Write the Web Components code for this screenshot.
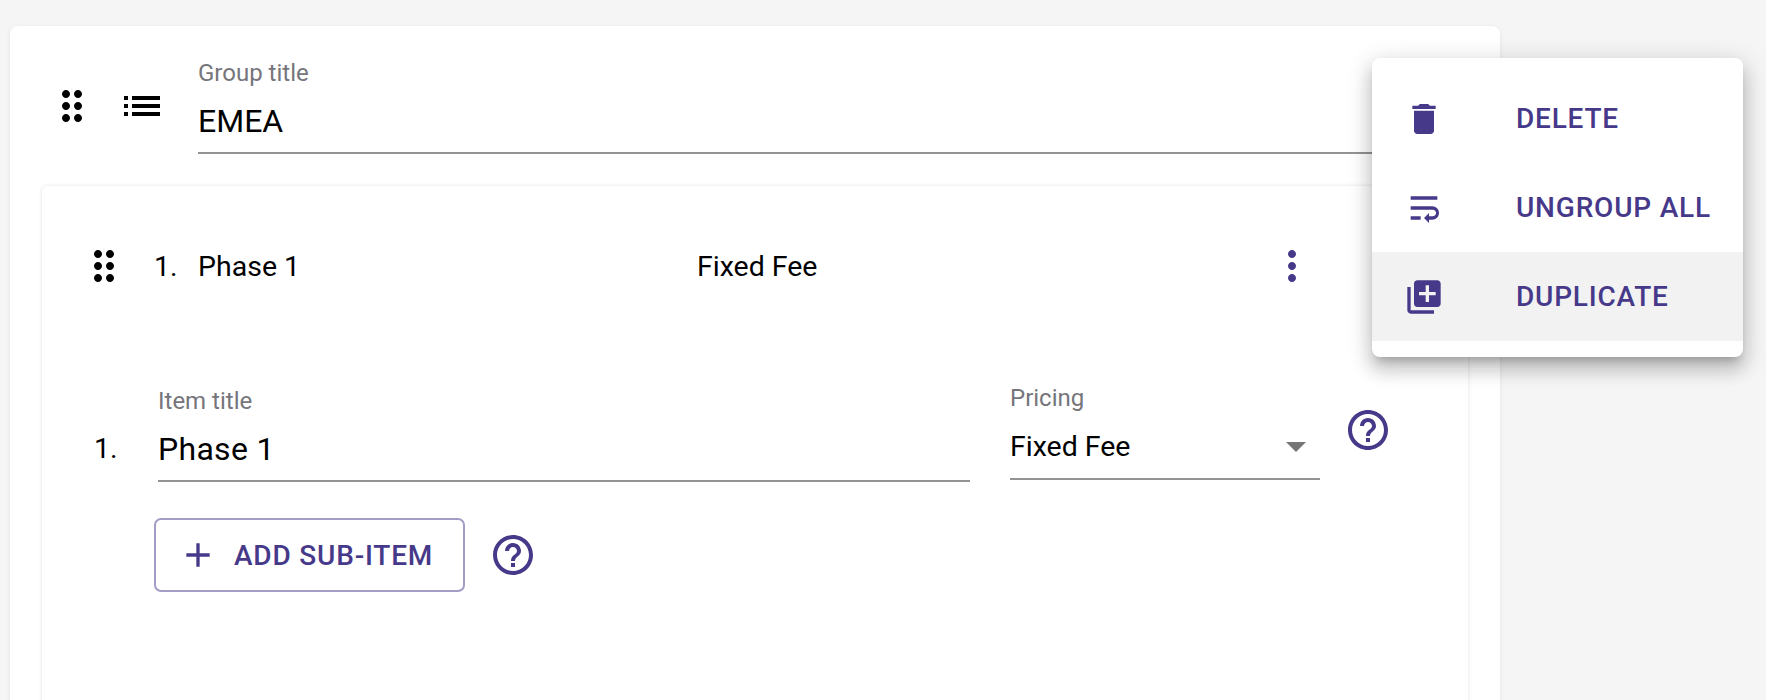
<!DOCTYPE html>
<html><head><meta charset="utf-8">
<style>
html,body{margin:0;height:700px;overflow:hidden;background:#f5f5f5;font-family:Roboto,"Liberation Sans",sans-serif;}
</style></head><body>
<x-page>
  <x-card kind="group">
    <x-row kind="group">
      <x-icon name="drag" style="margin-top:24px"></x-icon>
      <x-icon name="list" style="margin-left:22px;margin-top:24px"></x-icon>
      <x-field label="Group title" value="EMEA" style="margin-left:32px;flex:1;--value-size:32px;--gap:12px;--pad:10px"></x-field>
    </x-row>
    <x-card kind="item">
      <x-row kind="summary">
        <x-icon name="drag"></x-icon>
        <x-text style="margin:2px 0 0 26px;width:44px">1.</x-text>
        <x-text style="margin-top:2px;width:499px">Phase 1</x-text>
        <x-text style="margin-top:2px;width:571px">Fixed Fee</x-text>
        <x-icon name="more" color="#47398a"></x-icon>
      </x-row>
      <x-row kind="fields">
        <x-text style="width:64px;margin-top:46px;line-height:40px">1.</x-text>
        <x-field label="Item title" value="Phase 1" style="width:812px;--value-size:32px;--ls:.3px;--top:3px;--gap:12px;--pad:10px"></x-field>
        <x-field label="Pricing" value="Fixed Fee" select style="width:310px;margin-left:40px;--gap:13px;--pad:10px"></x-field>
        <x-icon name="help" color="#47398a" style="margin-left:24px;margin-top:23px"></x-icon>
      </x-row>
      <x-row kind="actions">
        <x-button>ADD SUB-ITEM</x-button>
        <x-icon name="help" color="#47398a" style="margin-left:24px"></x-icon>
      </x-row>
    </x-card>
  </x-card>
  <x-menu>
    <x-menu-item icon="delete">DELETE</x-menu-item>
    <x-menu-item icon="wrap">UNGROUP ALL</x-menu-item>
    <x-menu-item icon="library" active>DUPLICATE</x-menu-item>
  </x-menu>
</x-page>
<script>
const ICONS={
 drag:'M11 18c0 1.1-.9 2-2 2s-2-.9-2-2 .9-2 2-2 2 .9 2 2zm-2-8c-1.1 0-2 .9-2 2s.9 2 2 2 2-.9 2-2-.9-2-2-2zm0-6c-1.1 0-2 .9-2 2s.9 2 2 2 2-.9 2-2-.9-2-2-2zm6 4c1.1 0 2-.9 2-2s-.9-2-2-2-2 .9-2 2 .9 2 2 2zm0 2c-1.1 0-2 .9-2 2s.9 2 2 2 2-.9 2-2-.9-2-2-2zm0 6c-1.1 0-2 .9-2 2s.9 2 2 2 2-.9 2-2-.9-2-2-2z',
 list:'M3 13h2v-2H3v2zm0 4h2v-2H3v2zm0-8h2V7H3v2zm4 4h14v-2H7v2zm0 4h14v-2H7v2zM7 7v2h14V7H7z',
 more:'M12 8c1.1 0 2-.9 2-2s-.9-2-2-2-2 .9-2 2 .9 2 2 2zm0 2c-1.1 0-2 .9-2 2s.9 2 2 2 2-.9 2-2-.9-2-2-2zm0 6c-1.1 0-2 .9-2 2s.9 2 2 2 2-.9 2-2-.9-2-2-2z',
 help:'M11 18h2v-2h-2v2zm1-16C6.48 2 2 6.48 2 12s4.48 10 10 10 10-4.48 10-10S17.52 2 12 2zm0 18c-4.41 0-8-3.59-8-8s3.59-8 8-8 8 3.59 8 8-3.59 8-8 8zm0-14c-2.21 0-4 1.79-4 4h2c0-1.1.9-2 2-2s2 .9 2 2c0 2-3 1.75-3 5h2c0-2.25 3-2.5 3-5 0-2.21-1.79-4-4-4z',
 add:'M19 13h-6v6h-2v-6H5v-2h6V5h2v6h6v2z',
 delete:'M6 19c0 1.1.9 2 2 2h8c1.1 0 2-.9 2-2V7H6v12zM19 4h-3.5l-1-1h-5l-1 1H5v2h14V4z',
 wrap:'M4 19h6v-2H4v2zM20 5H4v2h16V5zm-3 6H4v2h13.25c1.1 0 2 .9 2 2s-.9 2-2 2H15v-2l-3 3 3 3v-2h2c2.21 0 4-1.79 4-4s-1.79-4-4-4z',
 library:'M4 6H2v14c0 1.1.9 2 2 2h14v-2H4V6zm16-4H8c-1.1 0-2 .9-2 2v12c0 1.1.9 2 2 2h12c1.1 0 2-.9 2-2V4c0-1.1-.9-2-2-2zm-1 9h-4v4h-2v-4H9V9h4V5h2v4h4v2z'
};
function def(name,html){
  customElements.define(name,class extends HTMLElement{
    connectedCallback(){
      if(this.shadowRoot)return;
      const s=this.attachShadow({mode:'open'});
      s.innerHTML=typeof html==='function'?html(this):html;
    }
  });
}
def('x-page',`<style>:host{display:block;position:relative;height:700px;overflow:hidden;padding-top:26px;box-sizing:border-box}</style><slot></slot>`);
def('x-card',el=>el.getAttribute('kind')==='group'
 ?`<style>:host{display:block;background:#fff;border-radius:8px;margin-left:10px;width:1490px;height:900px;box-shadow:0 1px 4px rgba(0,0,0,.08)}</style><slot></slot>`
 :`<style>:host{display:block;background:#fff;border-radius:5px;margin:32px 0 0 32px;width:1426px;height:700px;box-shadow:0 0 4px rgba(0,0,0,.12)}</style><slot></slot>`);
def('x-row',el=>{
 const k=el.getAttribute('kind');
 const m={group:'padding:32px 0 0 38px;height:96px;align-items:flex-start',
  summary:'padding:56px 0 0 38px;height:48px;align-items:center',
  fields:'margin-top:93px;padding-left:52px;align-items:flex-start',
  actions:'margin-top:36px;padding-left:113px;align-items:center'}[k];
 return `<style>:host{display:flex;${m}}</style><slot></slot>`;
});
def('x-icon',el=>{
 const n=el.getAttribute('name'),c=el.getAttribute('color')||'#000';
 return `<style>:host{display:block;flex:none;width:48px;height:48px}svg{display:block;width:48px;height:48px}</style><svg viewBox="0 0 24 24"><path fill="${c}" d="${ICONS[n]}"/></svg>`;
});
def('x-text',`<style>:host{display:block;flex:none;font-size:28.5px;color:#000;line-height:48px}</style><slot></slot>`);
def('x-field',el=>{
 const select=el.hasAttribute('select');
 return `<style>
 :host{display:block;box-sizing:border-box;padding-top:var(--top,0)}
 .l{font-size:24px;line-height:30px;color:#75757b}
 .b{display:flex;align-items:center;justify-content:space-between;margin-top:var(--gap,12px);padding:0 0 var(--pad,10px) 0;border-bottom:2px solid #939393}
 .v{font-size:var(--value-size,28.5px);letter-spacing:var(--ls,0);line-height:42px;color:#000}
 .a{width:0;height:0;border-left:10px solid transparent;border-right:10px solid transparent;border-top:10px solid #757575;margin-right:14px}
 </style><div class="l">${el.getAttribute('label')}</div><div class="b"><span class="v">${el.getAttribute('value')}</span>${select?'<span class="a"></span>':''}</div>`;
});
def('x-button',`<style>
 :host{display:flex;box-sizing:border-box;align-items:center;width:311px;height:74px;margin-left:-1px;border:2px solid #a39cc5;border-radius:7px;padding-left:22px;color:#47398a;font-size:28px;font-weight:500;letter-spacing:.8px;flex:none}
 svg{width:40px;height:40px;margin-right:16px;flex:none}
 </style><svg viewBox="0 0 24 24"><path fill="#47398a" d="${ICONS.add}"/></svg><slot></slot>`);
def('x-menu',`<style>:host{position:absolute;left:1372px;top:58px;width:371px;box-sizing:border-box;padding:16px 0;background:#fff;border-radius:8px;box-shadow:0 8px 8px -5px rgba(0,0,0,.2),0 13px 17px 2px rgba(0,0,0,.14),0 5px 23px 4px rgba(0,0,0,.12)}</style><slot></slot>`);
def('x-menu-item',el=>`<style>
 :host{display:flex;align-items:center;height:89px;padding-left:32px;color:#47398a;font-size:28px;font-weight:500;letter-spacing:.8px;${el.hasAttribute('active')?'background:#f2f2f2':''}}
 svg{width:40px;height:40px;margin-right:72px;flex:none}
 </style><svg viewBox="0 0 24 24"><path fill="#47398a" d="${ICONS[el.getAttribute('icon')]}"/></svg><slot></slot>`);
</script>
</body></html>
